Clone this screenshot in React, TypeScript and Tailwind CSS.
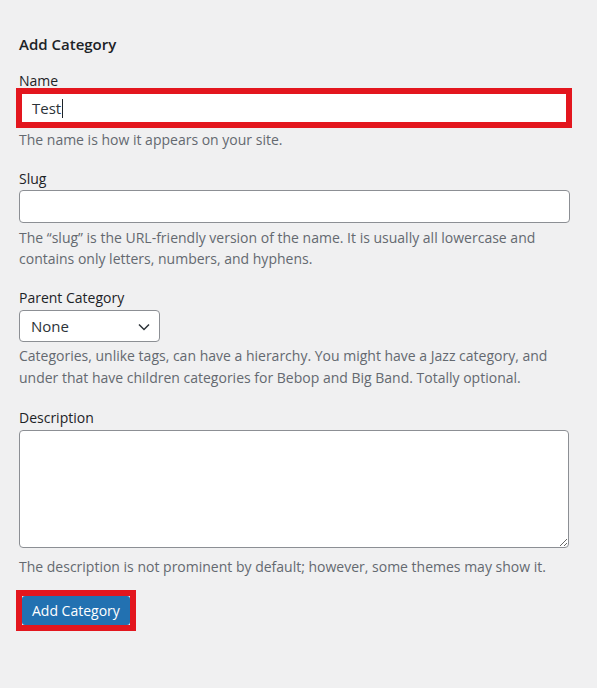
import React from "react";

const font = { fontFamily: '"Open Sans", "Noto Sans", sans-serif' };

const Help: React.FC<{ children: React.ReactNode; className?: string }> = ({ children, className = "" }) => (
  <p className={`text-[14px] leading-[21px] text-[#646970] ${className}`}>{children}</p>
);

const Label: React.FC<{ children: React.ReactNode }> = ({ children }) => (
  <label className="block text-[14px] leading-[19px] text-[#1d2327]">{children}</label>
);

export default function App() {
  return (
    <div className="min-h-[688px] w-[597px] bg-[#f0f0f1] px-[19px] pt-[34px]" style={font}>
      <h2 className="text-[15px] font-semibold leading-[20px] text-[#1d2327]">Add Category</h2>

      {/* Name */}
      <div className="mt-[17px]">
        <Label>Name</Label>
        <div className="-ml-[3px] mt-[-2px] w-[556px] border-[6px] border-[#e3161e] bg-white">
          <div className="flex h-[28px] items-center pl-[10px] text-[15px] text-[#2c3338]">
            Test
            <span className="ml-[1px] h-[19px] w-[1px] bg-[#1d2327]" />
          </div>
        </div>
        <Help className="mt-[1px]">The name is how it appears on your site.</Help>
      </div>

      {/* Slug */}
      <div className="mt-[19px]">
        <Label>Slug</Label>
        <input
          className="mt-[2px] block h-[33px] w-[551px] rounded-[4px] border border-[#8c8f94] bg-white px-2 text-[14px] outline-none"
          style={font}
        />
        <Help className="mt-[3.5px] w-[545px]">
          The “slug” is the URL-friendly version of the name. It is usually all lowercase and contains only
          letters, numbers, and hyphens.
        </Help>
      </div>

      {/* Parent */}
      <div className="mt-[19.5px]">
        <Label>Parent Category</Label>
        <div className="relative mt-[3px] flex h-[32px] w-[141px] items-center rounded-[4px] border border-[#8c8f94] bg-white pl-[11px] text-[15px] text-[#2c3338]">
          None
          <svg
            className="absolute right-[9px] top-[12px]"
            width="12"
            height="8"
            viewBox="0 0 12 8"
            fill="none"
            stroke="#2c3338"
            strokeWidth="1.5"
          >
            <path d="M1 1.5l5 5 5-5" />
          </svg>
        </div>
        <Help className="mt-[3px] w-[545px] leading-[22px]">
          Categories, unlike tags, can have a hierarchy. You might have a Jazz category, and under that have
          children categories for Bebop and Big Band. Totally optional.
        </Help>
      </div>

      {/* Description */}
      <div className="mt-[19px]">
        <Label>Description</Label>
        <textarea className="mt-[3px] block h-[118px] w-[550px] rounded-[4px] border border-[#8c8f94] bg-white outline-none" />
        <Help className="mt-[8px]">
          The description is not prominent by default; however, some themes may show it.
        </Help>
      </div>

      <div className="-ml-[3px] mt-[13px] inline-block border-[6px] border-[#e3161e]">
        <button
          className="block h-[29px] rounded-[3px] bg-[#2271b1] px-[10px] text-[14px] leading-[29px] text-white"
          style={font}
        >
          Add Category
        </button>
      </div>
    </div>
  );
}
